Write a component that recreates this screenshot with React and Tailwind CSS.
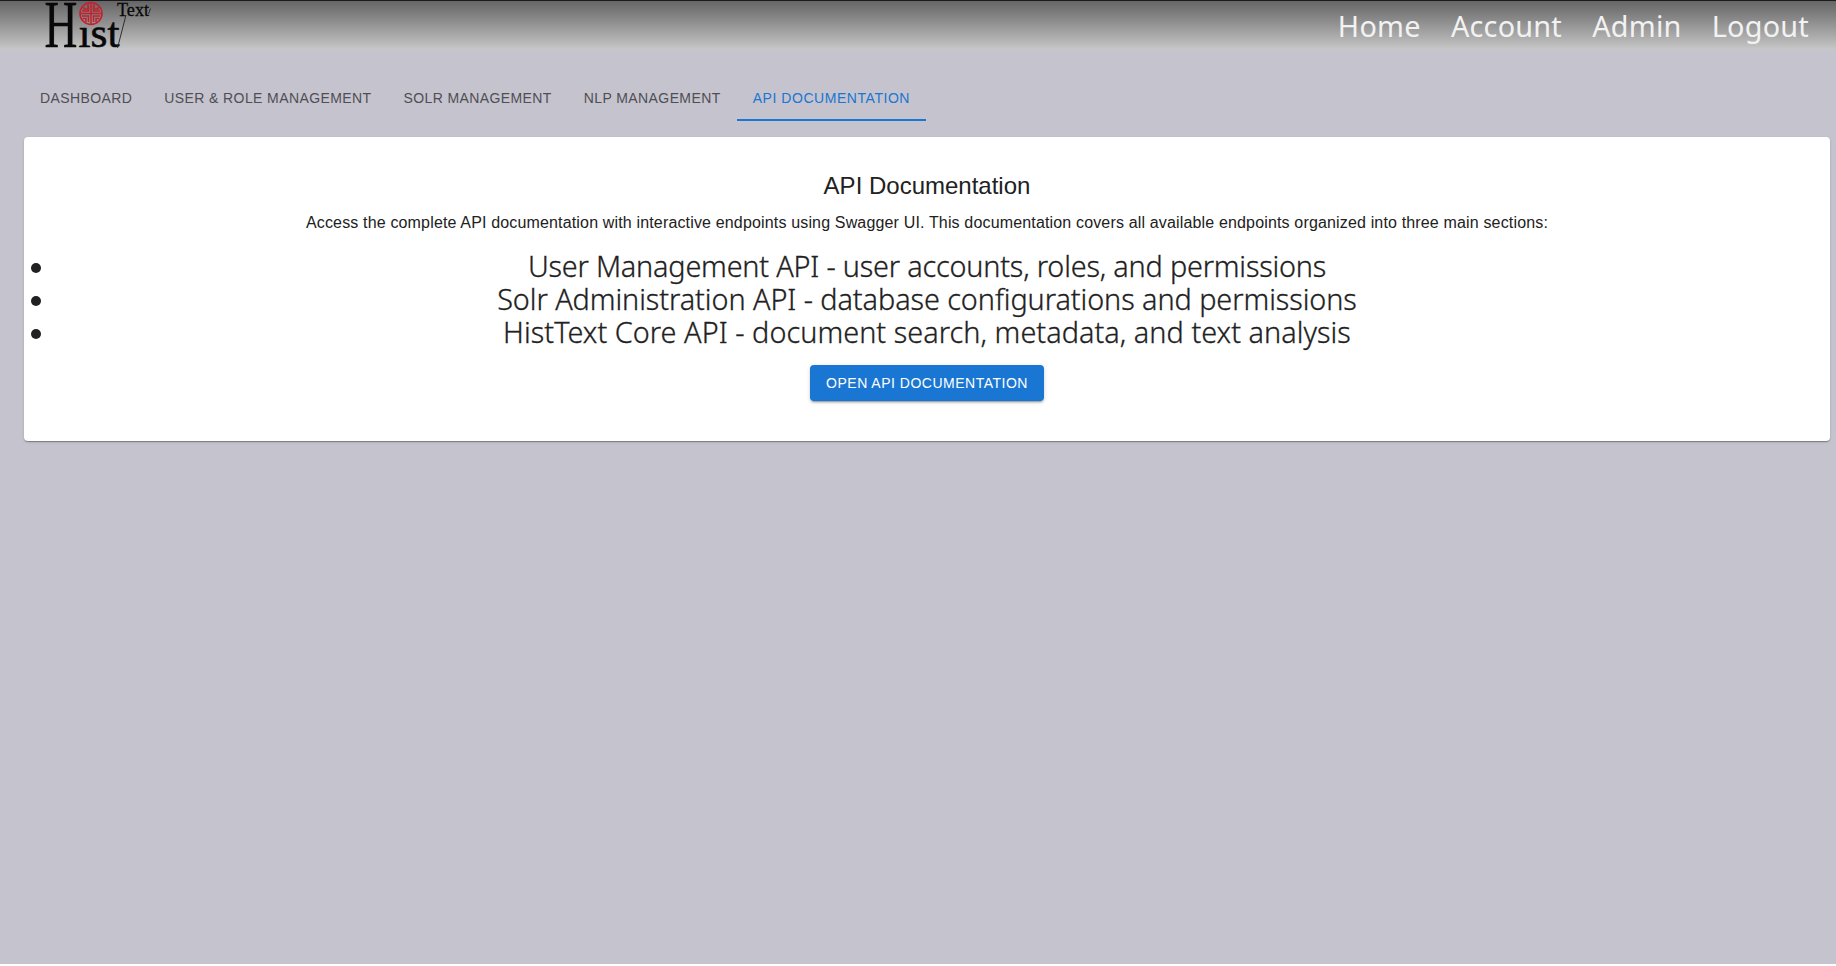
const NAV = ['Home', 'Account', 'Admin', 'Logout'];

const TABS = [
  { label: 'Dashboard' },
  { label: 'User & Role Management' },
  { label: 'SOLR Management' },
  { label: 'NLP Management' },
  { label: 'API Documentation', active: true },
];

const SECTIONS = [
  { text: 'User Management API - user accounts, roles, and permissions', spacing: 'tracking-[-0.19px]' },
  { text: 'Solr Administration API - database configurations and permissions', spacing: 'tracking-[-0.06px]' },
  { text: 'HistText Core API - document search, metadata, and text analysis', spacing: 'tracking-[0.05px]' },
];

function Logo() {
  return (
    <svg width="110" height="49" viewBox="42 0 110 49" className="block overflow-visible" fill="#080808" fontFamily="'Liberation Serif', serif">
      <text transform="translate(44.5 47) scale(0.67 1)" fontSize="68" stroke="#080808" strokeWidth="0.4">H</text>
      <text x="78.5" y="47" fontSize="43" textLength="41" lengthAdjust="spacingAndGlyphs" stroke="#080808" strokeWidth="0.6">ıst</text>
      <text x="117" y="15.5" fontSize="19.5" textLength="32" lengthAdjust="spacingAndGlyphs" stroke="#080808" strokeWidth="0.3">Text</text>
      <path d="M126 15L117.5 48M150.5 8.5L148.5 14" stroke="#222" strokeWidth="0.9" fill="none" />
      <g stroke="#c5202e" fill="none" strokeWidth="1.5">
        <circle cx="91" cy="13.5" r="11" strokeWidth="1.6" />
        <path d="M91 3V24M80 13.5H102M88 4V9H84V7M94 4V9H98V7M82 11H88.5V6M100 11H93.5V6M82 16H88.5V22M100 16H93.5V22M86 22V18.5H83M96 22V18.5H99" />
      </g>
    </svg>
  );
}

export default function App() {
  return (
    <div className="h-[966px] overflow-hidden bg-white font-['Liberation_Sans',Arial,sans-serif]">
      <div className="flex h-[964px] flex-col bg-[#c5c3ce]">
        <header className="flex h-[50px] shrink-0 items-start justify-between border-t border-[#1c1a1e] bg-linear-to-b from-[#666666] to-[#c8c8c8] pl-[42px] pr-[27px]">
          <div className="-mt-px"><Logo /></div>
          <nav className="flex gap-[30.2px] pt-[5px] font-['Noto_Sans',sans-serif] text-[28.8px] leading-[39px] tracking-[0.23px] text-[#f2f2f2]">
            {NAV.map((item) => (
              <a key={item} href="#">{item}</a>
            ))}
          </nav>
        </header>

        <main className="pl-6 pr-1.5 pt-[23px]">
          <div className="flex h-12" role="tablist">
            {TABS.map(({ label, active }) => (
              <button
                key={label}
                role="tab"
                className={
                  'border-b-2 px-4 pt-[5px] text-sm uppercase leading-[17.5px] ' +
                  (active ? 'border-[#1976d2] text-[#1976d2] tracking-[0.55px]' : 'border-transparent text-[#4f4e52] tracking-[0.4px]')
                }
              >
                {label}
              </button>
            ))}
          </div>

          <section className="mt-4 flex h-[304px] flex-col rounded-[4px] bg-white pt-[33px] text-center text-[#212121] shadow-[0_2px_1px_-1px_rgba(0,0,0,0.2),0_1px_1px_0_rgba(0,0,0,0.14),0_1px_3px_0_rgba(0,0,0,0.12)]">
            <h2 className="text-2xl leading-8">API Documentation</h2>
            <p className="mt-[9px] text-base leading-6 tracking-[0.158px]">
              Access the complete API documentation with interactive endpoints using Swagger UI. This documentation
              covers all available endpoints organized into three main sections:
            </p>
            <ul className="mt-3.5 font-['Noto_Sans',sans-serif] text-[28.8px] font-light leading-[33px] [-webkit-text-stroke:0.3px_#212121]">
              {SECTIONS.map(({ text, spacing }) => (
                <li key={text} className="flex h-[33px] items-center px-[7px]">
                  <span className="mt-1 size-2.5 shrink-0 rounded-full bg-[#212121]" />
                  <span className={'flex-1 whitespace-nowrap pr-2.5 ' + spacing}>{text}</span>
                </li>
              ))}
            </ul>
            <div className="mt-[17px]">
              <button className="mx-auto block h-9 rounded-[4px] bg-[#1976d2] px-4 text-sm uppercase leading-[24.5px] tracking-[0.5px] text-white shadow-[0_3px_1px_-2px_rgba(0,0,0,0.2),0_2px_2px_0_rgba(0,0,0,0.14),0_1px_5px_0_rgba(0,0,0,0.12)]">
                Open API Documentation
              </button>
            </div>
          </section>
        </main>
      </div>
    </div>
  );
}
